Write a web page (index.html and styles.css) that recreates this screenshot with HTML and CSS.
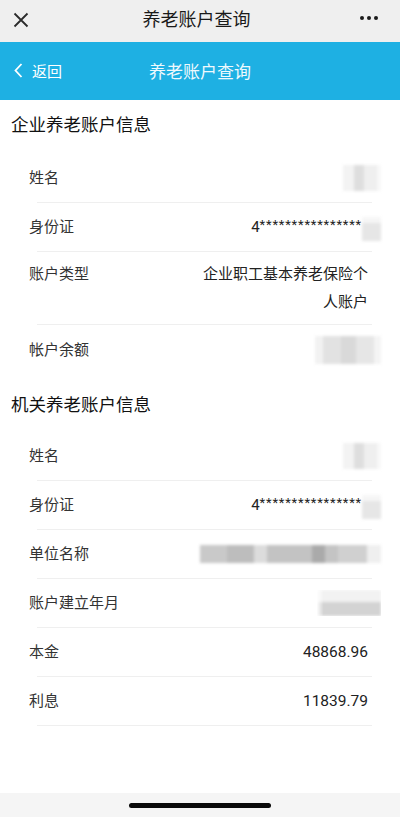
FILE: index.html
```html
<!DOCTYPE html>
<html lang="zh-CN">
<head>
    <meta charset="UTF-8">
    <meta name="viewport" content="width=device-width, initial-scale=1.0">
    <title>养老账户查询</title>
    <link rel="stylesheet" href="styles.css">
</head>
<body>
    <div class="page">
        <!-- wechat top bar -->
        <div class="wx-bar">
            <svg class="wx-close" width="16" height="16" viewBox="0 0 16 16">
                <path d="M1.5 1.5 L14.5 14.5 M14.5 1.5 L1.5 14.5" stroke="#2b2b2b" stroke-width="1.8" fill="none"/>
            </svg>
            <div class="wx-title">养老账户查询</div>
            <div class="wx-more"><span></span><span></span><span></span></div>
        </div>

        <!-- blue header -->
        <div class="header">
            <a class="back" href="#">
                <svg width="9" height="15" viewBox="0 0 9 15">
                    <path d="M7.5 1 L1.5 7.5 L7.5 14" stroke="#fff" stroke-width="1.8" fill="none"/>
                </svg>
                <span>返回</span>
            </a>
            <div class="header-title">养老账户查询</div>
        </div>

        <div class="content">
            <h2 class="section-title">企业养老账户信息</h2>
            <div class="list">
                <div class="row">
                    <span class="label">姓名</span>
                    <span class="value"><i class="blur blur-name"></i></span>
                </div>
                <div class="row">
                    <span class="label">身份证</span>
                    <span class="value id">4<span class="stars">****************</span><i class="blur blur-tail"></i></span>
                </div>
                <div class="row tall">
                    <span class="label">账户类型</span>
                    <span class="value wrap">企业职工基本养老保险个人账户</span>
                </div>
                <div class="row last">
                    <span class="label">帐户余额</span>
                    <span class="value"><i class="blur blur-money"></i></span>
                </div>
            </div>

            <h2 class="section-title second">机关养老账户信息</h2>
            <div class="list">
                <div class="row">
                    <span class="label">姓名</span>
                    <span class="value"><i class="blur blur-name"></i></span>
                </div>
                <div class="row">
                    <span class="label">身份证</span>
                    <span class="value id">4<span class="stars">****************</span><i class="blur blur-tail"></i></span>
                </div>
                <div class="row">
                    <span class="label">单位名称</span>
                    <span class="value"><i class="blur blur-unit"></i></span>
                </div>
                <div class="row">
                    <span class="label">账户建立年月</span>
                    <span class="value"><i class="blur blur-date"></i></span>
                </div>
                <div class="row">
                    <span class="label">本金</span>
                    <span class="value num">48868.96</span>
                </div>
                <div class="row">
                    <span class="label">利息</span>
                    <span class="value num">11839.79</span>
                </div>
            </div>
        </div>

        <div class="home-bar"><span class="indicator"></span></div>
    </div>
</body>
</html>
```

FILE: styles.css
```css
* {
    padding: 0;
    margin: 0;
    box-sizing: border-box;
}

body {
    font-family: Roboto, "Noto Sans CJK SC", sans-serif;
    background-color: #fff;
    color: #222;
}

.page {
    display: flex;
    flex-direction: column;
    height: 817px;
    width: 400px;
}

/* wechat bar */
.wx-bar {
    height: 42px;
    background-color: #efefef;
    display: flex;
    align-items: center;
    justify-content: space-between;
    padding: 0 22px 0 13px;
    flex-shrink: 0;
}

.wx-close {
    margin-top: -2px;
}

.wx-title {
    font-size: 18px;
    color: #1a1a1a;
    margin-left: 4px;
    margin-top: -7px;
}

.wx-more {
    display: flex;
    gap: 3px;
    margin-top: -7px;
}

.wx-more span {
    width: 4px;
    height: 4px;
    border-radius: 50%;
    background-color: #1a1a1a;
}

/* blue header */
.header {
    height: 58px;
    background-color: #1eb0e3;
    display: flex;
    align-items: center;
    position: relative;
    flex-shrink: 0;
}

.back {
    display: flex;
    align-items: center;
    gap: 9px;
    text-decoration: none;
    color: #fff;
    font-size: 15px;
    padding-left: 14px;
    margin-top: -2px;
}

.header-title {
    position: absolute;
    left: 0;
    right: 0;
    text-align: center;
    font-size: 17px;
    color: #eef9fd;
    margin-top: -2px;
    pointer-events: none;
}

/* content */
.content {
    flex: 1;
}

.section-title {
    font-size: 17.5px;
    font-weight: normal;
    color: #111;
    line-height: 26px;
    height: 54px;
    padding-top: 12px;
    padding-left: 11px;
}

.section-title.second {
    height: 58px;
    padding-top: 18px;
}

.row {
    display: flex;
    justify-content: space-between;
    align-items: center;
    margin: 0 28px 0 37px;
    padding-right: 4px;
    height: 49px;
    border-bottom: 1px solid #efefef;
    font-size: 15px;
    line-height: 24px;
}

.row.tall {
    height: 73px;
    align-items: flex-start;
    padding-top: 8px;
    line-height: 28px;
}

.row.last {
    border-bottom: none;
}

.label {
    margin-left: -8px;
    color: #333;
    white-space: nowrap;
}

.value {
    color: #222;
    text-align: right;
    display: flex;
    align-items: center;
    justify-content: flex-end;
}

.value.num {
    font-size: 15.5px;
}

.value.wrap {
    display: block;
    max-width: 170px;
}

.stars {
    font-size: 13px;
    letter-spacing: 0.8px;
    position: relative;
    top: -2px;
}

/* pixelated hidden values */
.blur {
    display: block;
    filter: blur(1.6px);
    margin-right: -13px;
}

.blur-name {
    width: 38px;
    height: 26px;
    background: linear-gradient(90deg, #f3f3f3 0 28%, #dedede 28% 56%, #efefef 56% 90%, #f8f8f8 90%);
}

.blur-tail {
    width: 19px;
    height: 24px;
    margin-top: 4px;
    background: linear-gradient(180deg, #f6f6f6 0 25%, #e6e6e6 25%);
}

.blur-money {
    width: 66px;
    height: 28px;
    background: linear-gradient(90deg, #f2f2f2 0 12%, #e2e2e2 12% 40%, #d9d9d9 40% 62%, #e6e6e6 62% 90%, #f4f4f4 90%);
}

.blur-unit {
    width: 181px;
    height: 18px;
    background: linear-gradient(90deg, #c9c9c9 0 15%, #bdbdbd 15% 30%, #dcdcdc 30% 37%, #c3c3c3 37% 62%, #aaaaaa 62% 69%, #c4c4c4 69% 76%, #d0d0d0 76% 92%, #efefef 92%);
}

.blur-date {
    width: 70px;
    height: 26px;
    background: linear-gradient(180deg, #f2f2f2 0 45%, #d3d3d3 45%);
    -webkit-mask: linear-gradient(90deg, transparent 0 8%, #000 18%);
}

/* bottom home indicator */
.home-bar {
    height: 24px;
    background-color: #f5f5f5;
    display: flex;
    justify-content: center;
    align-items: center;
    flex-shrink: 0;
}

.indicator {
    width: 142px;
    height: 5px;
    border-radius: 3px;
    background-color: #0a0a0a;
}
```
